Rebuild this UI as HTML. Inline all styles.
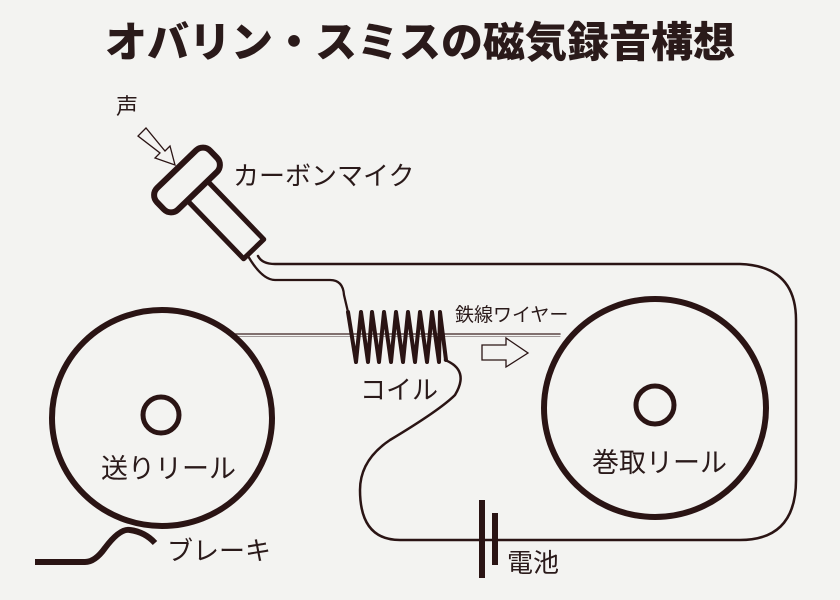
<!DOCTYPE html>
<html><head><meta charset="utf-8"><style>
html,body{margin:0;padding:0;background:#f3f3f1;}
svg{display:block}
text{font-family:"Liberation Sans","Noto Sans CJK JP",sans-serif;fill:#2a1a1a}
</style></head><body>
<svg width="840" height="600" viewBox="0 0 840 600" xmlns="http://www.w3.org/2000/svg">
<rect width="840" height="600" fill="#f3f3f1"/>
<text x="420" y="57" text-anchor="middle" font-size="42" font-weight="900" style="font-family:'Noto Sans CJK JP',sans-serif" fill="#2a1a1a">オバリン・スミスの磁気録音構想</text>
<g stroke="#2a1414" fill="none" stroke-linecap="round" stroke-linejoin="round">
<line x1="235" y1="334" x2="560" y2="334" stroke="#5a4444" stroke-width="1.6"/>
<line x1="235" y1="336.5" x2="560" y2="336.5" stroke="#a09898" stroke-width="1"/>
<ellipse cx="162" cy="418" rx="110" ry="108" stroke-width="6"/>
<circle cx="161" cy="415" r="18" stroke-width="5"/>
<ellipse cx="655" cy="408" rx="111" ry="109" stroke-width="6"/>
<circle cx="655" cy="405" r="19" stroke-width="5"/>
<path d="M258 256 Q262 264 275 264 L740 264 Q796 266 796 320 L796 480 Q796 540 740 540 L400 540 Q360 540 360 490 Q360 460 390 440 Q440 410 455 395 Q470 370 445 360" stroke-width="2.5"/>
<path d="M248 256 Q262 280 275 280 L330 280 Q343 280 344 295 L348 312" stroke-width="2.3"/>
<path d="M348 312 L356 362 L361 312 L368 362 L372 312 L379 362 L384 312 L391 362 L396 312 L403 362 L408 312 L415 362 L420 312 L427 362 L432 312 L439 362 L440 312 L446 360" stroke-width="4"/>
<line x1="482" y1="500" x2="482" y2="578" stroke-width="6" stroke-linecap="butt"/>
<line x1="495" y1="513" x2="495" y2="565" stroke-width="6" stroke-linecap="butt"/>
<path d="M35 562 L85 562 Q95 562 105 548 Q120 528 130 530 Q145 532 155 543" stroke-width="6" stroke-linecap="butt"/>
<g transform="translate(187,180) rotate(46)">
<rect x="8" y="-14" width="88" height="28" stroke-width="5" fill="#f3f3f1"/>
</g>
<g transform="translate(187,180) rotate(-44)">
<rect x="-37" y="-15" width="74" height="30" rx="10" stroke-width="6" fill="#f3f3f1"/>
</g>
</g>
<path d="M146 128 L138 136 L160 153 L155 158 L175 165 L170 146 L165 151 Z" fill="#f3f3f1" stroke="#2a1414" stroke-width="1.3"/>
<path d="M482 345 L506 345 L506 338 L528 353 L506 367 L506 360 L482 360 Z" fill="#f3f3f1" stroke="#2a1414" stroke-width="1.3"/>
<text x="116" y="114" font-size="22">声</text>
<text x="233" y="185" font-size="26">カーボンマイク</text>
<text x="455" y="321" font-size="19">鉄線ワイヤー</text>
<text x="360" y="399" font-size="26">コイル</text>
<text x="101" y="478" font-size="27">送りリール</text>
<text x="592" y="472" font-size="27">巻取リール</text>
<text x="167" y="560" font-size="26">ブレーキ</text>
<text x="507" y="572" font-size="26">電池</text>
</svg>
</body></html>
